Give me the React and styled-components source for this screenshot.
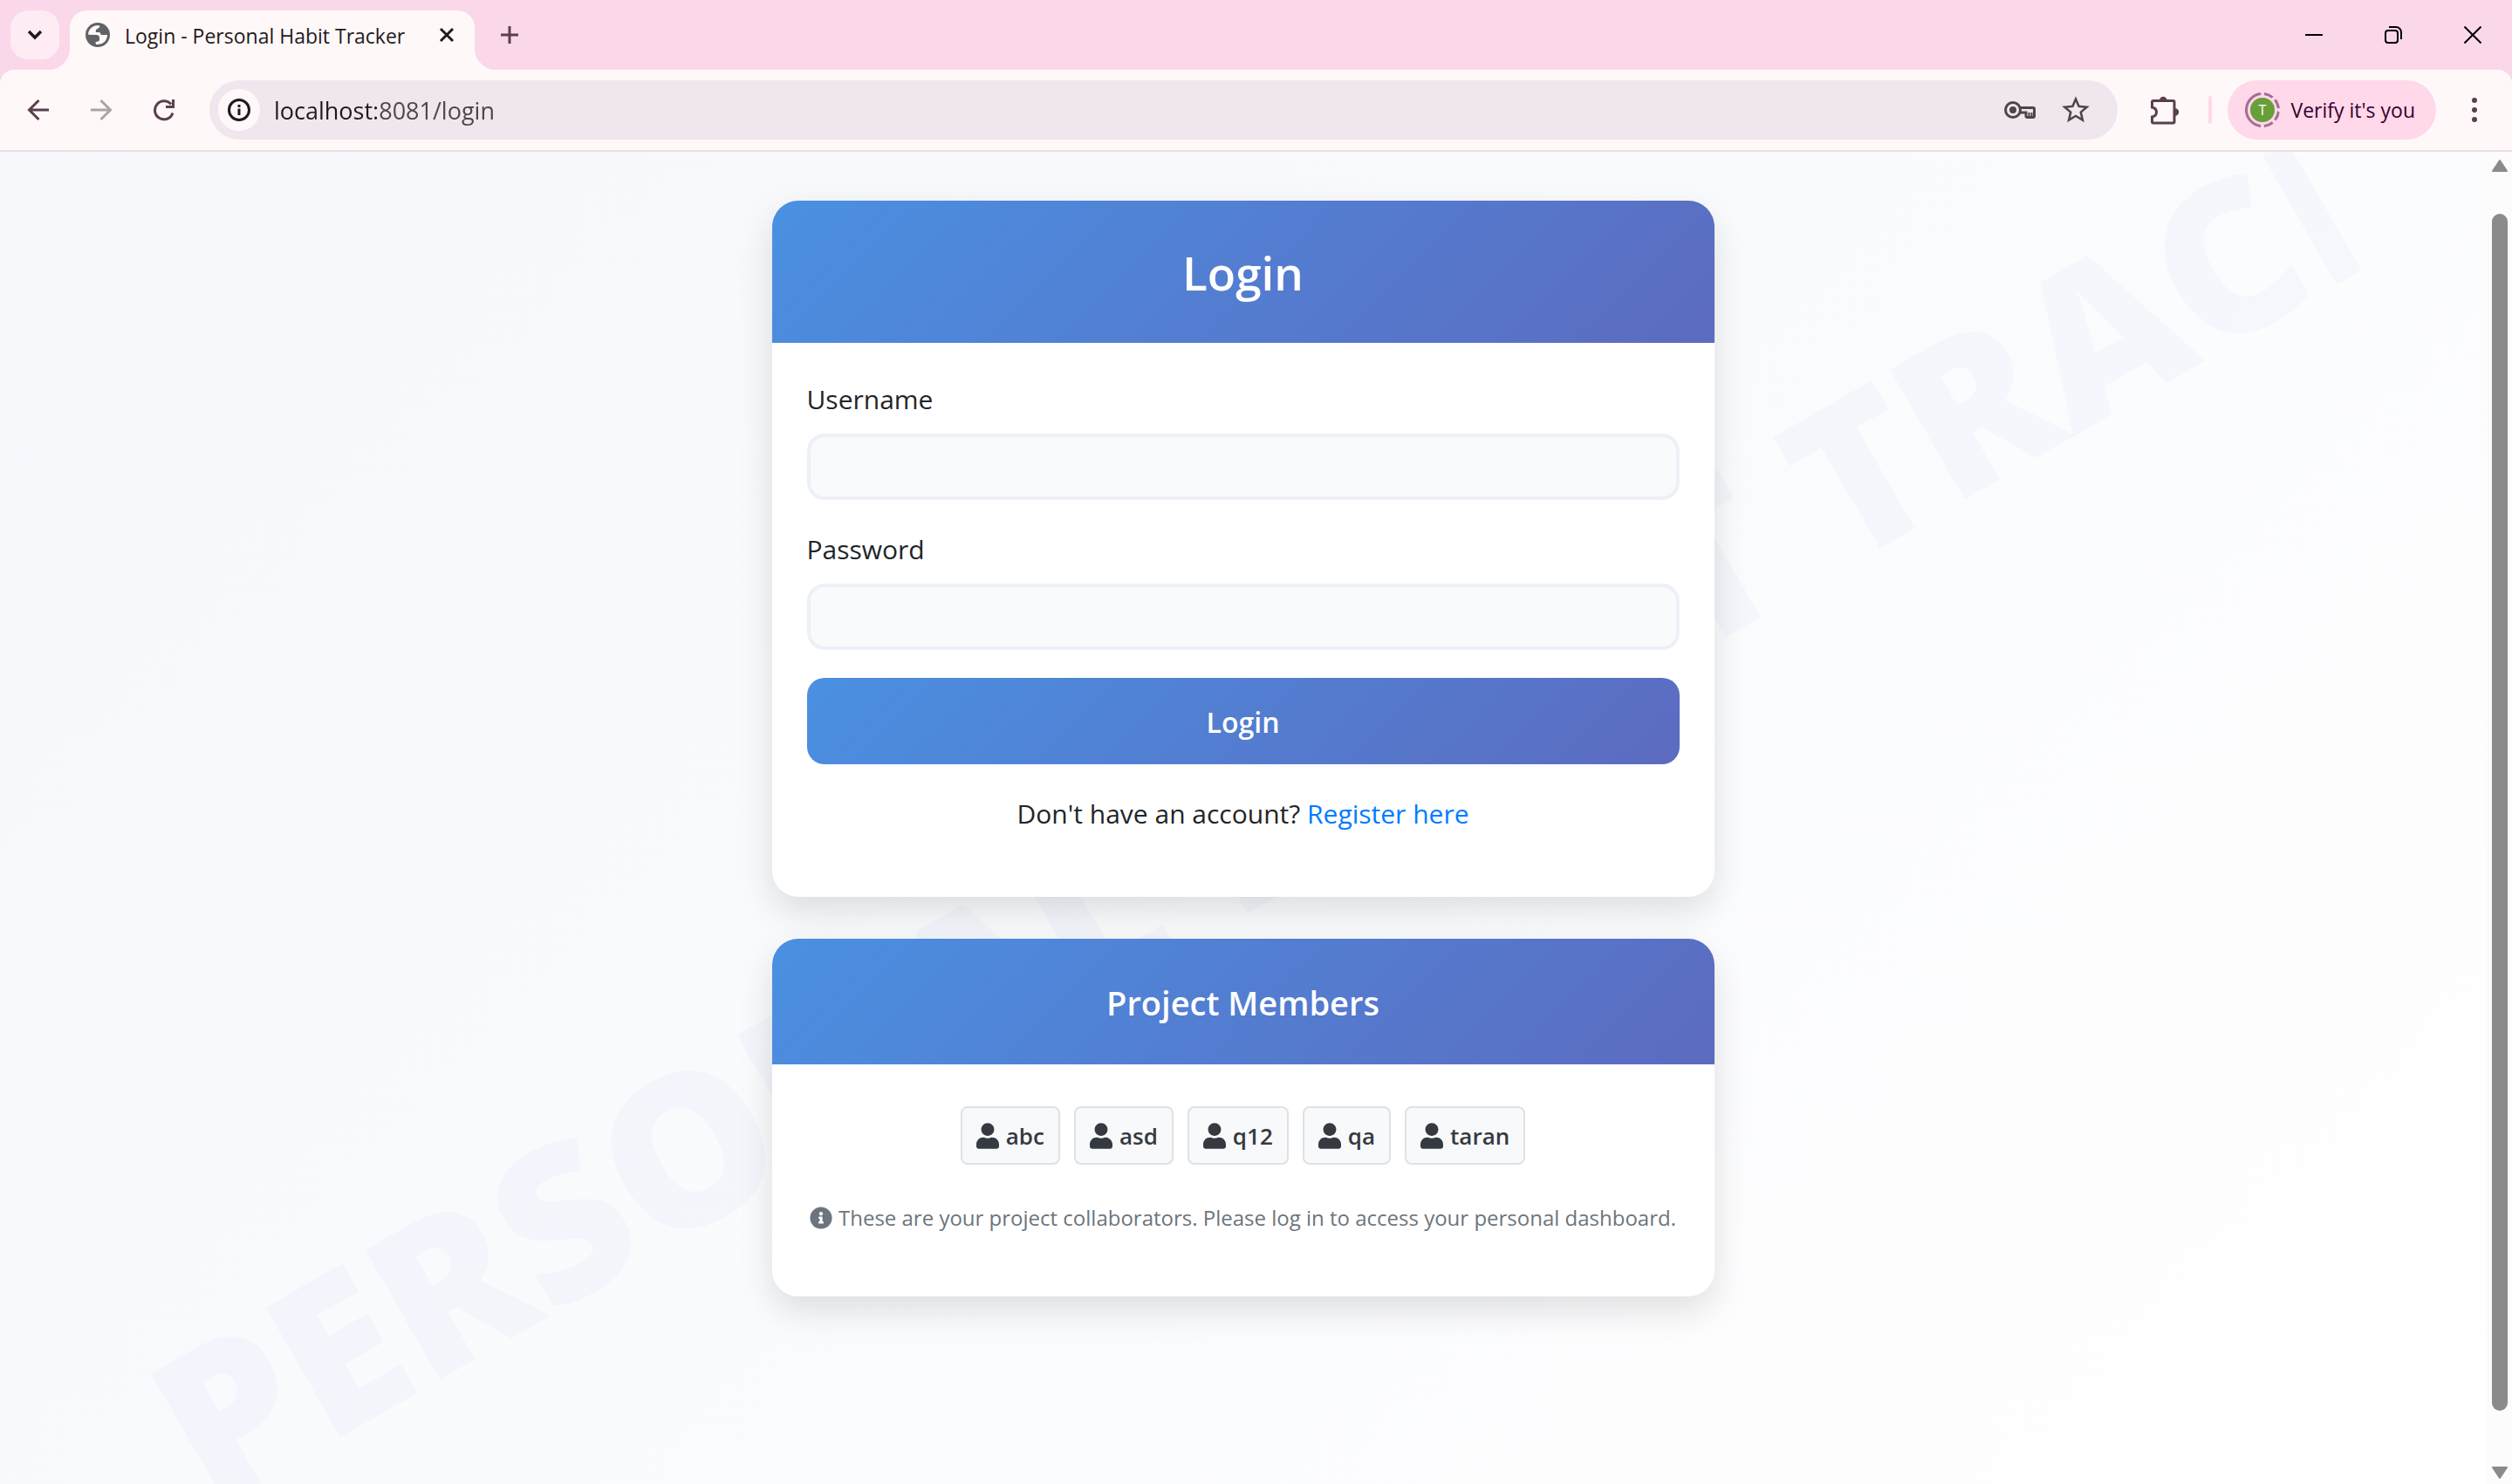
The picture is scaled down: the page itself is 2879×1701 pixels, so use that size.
import React from "react";
import styled, { createGlobalStyle, css } from "styled-components";
import { FaUser, FaInfoCircle } from "react-icons/fa";
import { MdStarBorder } from "react-icons/md";

const GlobalStyle = createGlobalStyle`
  *, *::before, *::after { box-sizing: border-box; }
  body {
    margin: 0;
    font-family: "Open Sans", "Noto Sans", sans-serif;
    color: #212529;
  }
  button, input { font-family: inherit; margin: 0; }
  h1, h2, p, ul { margin: 0; padding: 0; font-weight: inherit; }
`;

const brandGradient = "linear-gradient(135deg, #4a90e2 0%, #5c6bc0 100%)";

const BrowserWindow = styled.div`
  display: flex;
  flex-direction: column;
  min-height: 100vh;
  overflow: hidden;
  background: #fbd8e9;
`;

/* ---------- tab strip ---------- */

const TabStrip = styled.header`
  display: flex;
  height: 80px;
  padding: 12px 0 0 12px;
`;

const bareButton = css`
  display: flex;
  align-items: center;
  justify-content: center;
  flex: none;
  padding: 0;
  border: 0;
  background: transparent;
  cursor: pointer;
`;

const TabSearch = styled.button`
  ${bareButton}
  width: 56px;
  height: 56px;
  margin-right: 12px;
  border-radius: 20px;
  background: #ffebf3;
`;

const Tab = styled.div`
  position: relative;
  display: flex;
  align-items: center;
  width: 464px;
  padding: 0 12px 12px 18px;
  border-radius: 20px 20px 0 0;
  background: #fff8f8;

  &::before, &::after {
    content: "";
    position: absolute;
    bottom: 0;
    width: 24px;
    height: 24px;
  }
  &::before {
    right: 100%;
    background: radial-gradient(circle at 0 0, transparent 24px, #fff8f8 24px);
  }
  &::after {
    left: 100%;
    background: radial-gradient(circle at 100% 0, transparent 24px, #fff8f8 24px);
  }
`;

const TabTitle = styled.span`
  flex: 1;
  margin-left: 17px;
  padding-top: 2px;
  font-size: 23px;
  line-height: 32px;
  color: #1f1a1d;
  white-space: nowrap;
`;

const TabClose = styled.button`
  ${bareButton}
  width: 40px;
  height: 40px;
`;

const NewTab = styled.button`
  ${bareButton}
  width: 56px;
  height: 56px;
  margin-left: 12px;
`;

const WindowControls = styled.div`
  display: flex;
  height: 56px;
  margin-left: auto;
`;

const WindowButton = styled.button`
  ${bareButton}
  width: 91px;
`;

/* ---------- toolbar ---------- */

const Toolbar = styled.nav`
  display: flex;
  align-items: center;
  padding: 12px 7px 12px 8px;
  border-bottom: 2px solid #f0dce3;
  border-radius: 16px 16px 0 0;
  background: #fff8f8;
  color: #5a3f4f;
`;

const ToolButton = styled.button`
  ${bareButton}
  width: ${({ $narrow }) => ($narrow ? 64 : 72)}px;
  height: 68px;
  color: inherit;
  &:disabled { color: #aca4a7; }
`;

const AddressBar = styled.form`
  display: flex;
  align-items: center;
  flex: 1;
  height: 68px;
  margin: 0 18px 0 16px;
  padding: 0 16px 0 10px;
  border-radius: 34px;
  background: #f0e6ed;
  color: #4f444b;
`;

const SiteInfo = styled.button`
  ${bareButton}
  width: 48px;
  height: 48px;
  border-radius: 50%;
  background: #fff8f8;
`;

const AddressInput = styled.input`
  flex: 1;
  min-width: 0;
  height: 48px;
  margin-left: 14px;
  padding: 0 0 0 2px;
  border: 0;
  outline: 0;
  font-size: 27px;
  color: transparent;
  background: linear-gradient(90deg, #1f1a1d 121px, #4f444b 121px);
  background-clip: text;
  -webkit-background-clip: text;
`;

const Divider = styled.span`
  width: 4px;
  height: 32px;
  margin: 0 18px 0 14px;
  border-radius: 2px;
  background: #ffd8ea;
`;

const ProfileButton = styled.button`
  ${bareButton}
  gap: 12px;
  height: 68px;
  margin-right: 8px;
  padding: 0 24px 0 20px;
  border-radius: 34px;
  background: #ffd8ea;
  font-size: 23px;
  line-height: 32px;
  color: #36002c;
`;

/* ---------- page ---------- */

const Viewport = styled.div`
  display: flex;
  flex: 1;
`;

const Page = styled.main`
  position: relative;
  flex: 1;
  min-width: 0;
  padding: 56px 24px;
  overflow: hidden;
  background: linear-gradient(135deg, #f5f7fb 0%, #ffffff 100%);
`;

const Watermark = styled.div`
  position: absolute;
  left: 0;
  top: 50%;
  width: 100%;
  padding: 8px 0 0 4px;
  overflow: hidden;
  font-size: 240px;
  line-height: 360px;
  font-weight: 800;
  white-space: nowrap;
  color: rgba(74, 115, 215, 0.035);
  transform: translateY(-50%) rotate(-30deg);
  pointer-events: none;
`;

const CardStack = styled.div`
  position: relative;
  display: flex;
  flex-direction: column;
  gap: 48px;
  max-width: 1080px;
  margin: 0 auto;
`;

const Card = styled.section`
  border-radius: 30px;
  overflow: hidden;
  background: #fff;
  box-shadow: 0 16px 40px rgba(0, 0, 0, 0.12);
`;

const CardHeader = styled.div`
  padding: 49px 48px 47px;
  background: ${brandGradient};
  color: #fff;
  text-align: center;
`;

const Title = styled.h1`
  font-size: 53px;
  line-height: 67px;
  font-weight: 600;
`;

const Subtitle = styled.h2`
  font-size: 38px;
  line-height: 48px;
  font-weight: 600;
`;

const CardBody = styled.div`
  padding: 40px;
`;

const Field = styled.div`
  display: flex;
  flex-direction: column;
  gap: 14px;
  margin-bottom: 32px;
`;

const Label = styled.label`
  font-size: 30px;
  line-height: 50px;
`;

const TextInput = styled.input`
  height: 76px;
  padding: 0 24px;
  border: 4px solid #edf0f7;
  border-radius: 20px;
  outline: 0;
  background: #f8fafc;
  font-size: 30px;
  color: inherit;
`;

const SubmitButton = styled.button`
  width: 100%;
  height: 99px;
  padding: 2px 0 0;
  border: 0;
  border-radius: 20px;
  background: ${brandGradient};
  color: #fff;
  font-size: 32px;
  font-weight: 600;
  cursor: pointer;
`;

const Prompt = styled.p`
  margin: 32px 0 30px;
  font-size: 30px;
  line-height: 50px;
  text-align: center;
`;

const Link = styled.a`
  color: #007bff;
  text-decoration: none;
`;

const MemberList = styled.ul`
  display: flex;
  flex-wrap: wrap;
  justify-content: center;
  gap: 16px;
  padding: 8px 0;
  list-style: none;
`;

const Member = styled.li`
  display: flex;
  align-items: center;
  gap: 8px;
  height: 67px;
  padding: 0 16px;
  border: 2px solid #dee2e6;
  border-radius: 8px;
  background: #f8f9fa;
  color: #343a40;
  font-size: 26px;
  font-weight: 600;

  svg { width: 26px; height: 30px; }
`;

const Note = styled.p`
  display: flex;
  align-items: center;
  justify-content: center;
  gap: 7px;
  margin: 32px 0 30px;
  font-size: 24px;
  line-height: 41px;
  color: #6c757d;

  svg { flex: none; width: 26px; height: 26px; }
`;

/* ---------- scrollbar ---------- */

const Scrollbar = styled.div`
  display: flex;
  flex-direction: column;
  width: 30px;
  padding: 9px 5px 6px 7px;
  background: #fcfcfc;
  color: #8b8b8b;
`;

const ScrollArrow = styled.button`
  ${bareButton}
  height: 14px;
  color: inherit;
`;

const ScrollThumb = styled.div`
  flex: 1;
  margin: 48px 0 64px;
  border-radius: 9px;
  background: currentColor;
`;

/* ---------- icons ---------- */

const Stroke = ({ w, h, sw = 3, children, ...rest }) => (
  <svg width={w} height={h} viewBox={`0 0 ${w} ${h}`} fill="none" stroke="currentColor" strokeWidth={sw} aria-hidden="true" {...rest}>
    {children}
  </svg>
);

const ChevronIcon = () => (
  <Stroke w={18} h={14} sw={3.4} color="#1f1a1d"><path d="M2 3l7 7 7-7" /></Stroke>
);
const GlobeIcon = () => (
  <svg width="28" height="28" viewBox="0 0 84 84" aria-hidden="true">
    <circle cx="42" cy="42" r="42" fill="#5f6368" />
    <path fill="#fff8f8" d="M9 41A33 33 0 0 1 42 9q7 0 7 3c0 6-5 6-12 11q-3 3-1 10h11q5 0 6 9h22A33 33 0 0 1 39 75q-4 0-4-4v-5q13 0 13-8v-5q0-11-10-11z" />
  </svg>
);
const CloseTabIcon = () => (
  <Stroke w={18} h={18} color="#1f1a1d"><path d="M2 2l14 14M16 2L2 16" /></Stroke>
);
const PlusIcon = () => (
  <Stroke w={20} h={20} color="#5a3f4f"><path d="M10 0v20M0 10h20" /></Stroke>
);
const MinimizeIcon = () => (
  <Stroke w={20} h={20} sw={2} color="#000"><path d="M0 10h20" /></Stroke>
);
const RestoreIcon = () => (
  <Stroke w={20} h={20} sw={2} color="#000">
    <rect x="1" y="5" width="14" height="14" rx="3" />
    <path d="M5 1h8a6 6 0 0 1 6 6v8" />
  </Stroke>
);
const CloseIcon = () => (
  <Stroke w={20} h={20} sw={2} color="#000"><path d="M0.5 0.5l19 19M19.5 0.5l-19 19" /></Stroke>
);
const BackIcon = () => (
  <Stroke w={26} h={26}><path d="M25 13H3M13.5 2L2.5 13l11 11" /></Stroke>
);
const ForwardIcon = () => (
  <Stroke w={26} h={26}><path d="M1 13h22M12.5 2l11 11-11 11" /></Stroke>
);
const ReloadIcon = () => (
  <Stroke w={26} h={26}>
    <path d="M23 16.5A10.5 10.5 0 1 1 21 6.5" />
    <path d="M23.5 1v8.500H15" />
  </Stroke>
);
const InfoIcon = () => (
  <Stroke w={28} h={28} color="#1f1a1d">
    <circle cx="14" cy="14" r="11.5" />
    <path d="M14 12.5v7.500M14 8v3" />
  </Stroke>
);
const KeyIcon = () => (
  <Stroke w={36} h={20}>
    <circle cx="10" cy="10" r="8.5" />
    <circle cx="10" cy="10" r="4" fill="currentColor" stroke="none" />
    <path d="M17.5 7.500H33q1.500 0 1.500 1.500v8q0 1.500-1.500 1.500h-6.500q-1.500 0-1.500-1.500v-4h-7.500" />
    <path strokeWidth="2" d="M28.5 13v5M31.5 13v5" />
  </Stroke>
);
const PuzzleIcon = () => (
  <Stroke w={34} h={34}>
    <path d="M4 6.500h22.500q1.500 0 1.500 1.500v22.500q0 1.500-1.500 1.500H4q-1.500 0-1.500-1.500V25q5-1 5-5.500t-5-5.500V8Q2.500 6.500 4 6.500z" />
    <path fill="currentColor" stroke="none" d="M11 6a4.200 4.200 0 0 1 8.400 0zM29 15.300a4.200 4.200 0 0 1 0 8.400z" />
  </Stroke>
);
const AvatarIcon = () => (
  <svg width="40" height="40" viewBox="0 0 40 40" aria-hidden="true">
    <circle cx="20" cy="20" r="18.5" fill="none" stroke="#a26f92" strokeWidth="3" pathLength="360"
      strokeDasharray="168 12 33 12 33 12 33 12 33 12" transform="rotate(96 20 20)" />
    <circle cx="20" cy="20" r="14" fill="#689f38" />
    <text x="20" y="26" fontSize="16" textAnchor="middle" fill="#fff">T</text>
  </svg>
);
const MenuIcon = () => (
  <svg width="6" height="30" viewBox="0 0 6 30" fill="currentColor" aria-hidden="true">
    <circle cx="3" cy="4" r="3" /><circle cx="3" cy="15" r="3" /><circle cx="3" cy="26" r="3" />
  </svg>
);
const ArrowGlyph = ({ down }) => (
  <svg width="18" height="14" viewBox="0 0 18 14" fill="currentColor" stroke="currentColor" strokeWidth="2" strokeLinejoin="round" aria-hidden="true">
    <path d={down ? "M1 1h16L9 13z" : "M1 13h16L9 1z"} />
  </svg>
);

const fields = [
  { id: "username", label: "Username", type: "text" },
  { id: "password", label: "Password", type: "password" },
];

const members = ["abc", "asd", "q12", "qa", "taran"];

export default function App() {
  return (
    <BrowserWindow>
      <GlobalStyle />
      <TabStrip>
        <TabSearch aria-label="Search tabs"><ChevronIcon /></TabSearch>
        <Tab>
          <GlobeIcon />
          <TabTitle>Login - Personal Habit Tracker</TabTitle>
          <TabClose aria-label="Close tab"><CloseTabIcon /></TabClose>
        </Tab>
        <NewTab aria-label="New tab"><PlusIcon /></NewTab>
        <WindowControls>
          <WindowButton aria-label="Minimize"><MinimizeIcon /></WindowButton>
          <WindowButton aria-label="Restore"><RestoreIcon /></WindowButton>
          <WindowButton aria-label="Close"><CloseIcon /></WindowButton>
        </WindowControls>
      </TabStrip>

      <Toolbar>
        <ToolButton aria-label="Back"><BackIcon /></ToolButton>
        <ToolButton aria-label="Forward" disabled><ForwardIcon /></ToolButton>
        <ToolButton aria-label="Reload"><ReloadIcon /></ToolButton>
        <AddressBar onSubmit={(e) => e.preventDefault()}>
          <SiteInfo type="button" aria-label="Site information"><InfoIcon /></SiteInfo>
          <AddressInput aria-label="Address" defaultValue="localhost:8081/login" spellCheck={false} />
          <ToolButton type="button" $narrow aria-label="Passwords"><KeyIcon /></ToolButton>
          <ToolButton type="button" $narrow aria-label="Bookmark"><MdStarBorder size={38} /></ToolButton>
        </AddressBar>
        <ToolButton aria-label="Extensions"><PuzzleIcon /></ToolButton>
        <Divider />
        <ProfileButton><AvatarIcon />Verify it's you</ProfileButton>
        <ToolButton aria-label="Menu"><MenuIcon /></ToolButton>
      </Toolbar>

      <Viewport>
        <Page>
          <Watermark aria-hidden="true">PERSONAL HABIT TRACKER</Watermark>
          <CardStack>
            <Card>
              <CardHeader><Title>Login</Title></CardHeader>
              <CardBody>
                <form onSubmit={(e) => e.preventDefault()}>
                  {fields.map(({ id, label, type }) => (
                    <Field key={id}>
                      <Label htmlFor={id}>{label}</Label>
                      <TextInput id={id} name={id} type={type} />
                    </Field>
                  ))}
                  <SubmitButton type="submit">Login</SubmitButton>
                </form>
                <Prompt>Don't have an account? <Link href="#register">Register here</Link></Prompt>
              </CardBody>
            </Card>
            <Card>
              <CardHeader><Subtitle>Project Members</Subtitle></CardHeader>
              <CardBody>
                <MemberList>
                  {members.map((name) => (
                    <Member key={name}><FaUser />{name}</Member>
                  ))}
                </MemberList>
                <Note>
                  <FaInfoCircle />
                  <span>These are your project collaborators. Please log in to access your personal dashboard.</span>
                </Note>
              </CardBody>
            </Card>
          </CardStack>
        </Page>
        <Scrollbar>
          <ScrollArrow aria-label="Scroll up"><ArrowGlyph /></ScrollArrow>
          <ScrollThumb />
          <ScrollArrow aria-label="Scroll down"><ArrowGlyph down /></ScrollArrow>
        </Scrollbar>
      </Viewport>
    </BrowserWindow>
  );
}
